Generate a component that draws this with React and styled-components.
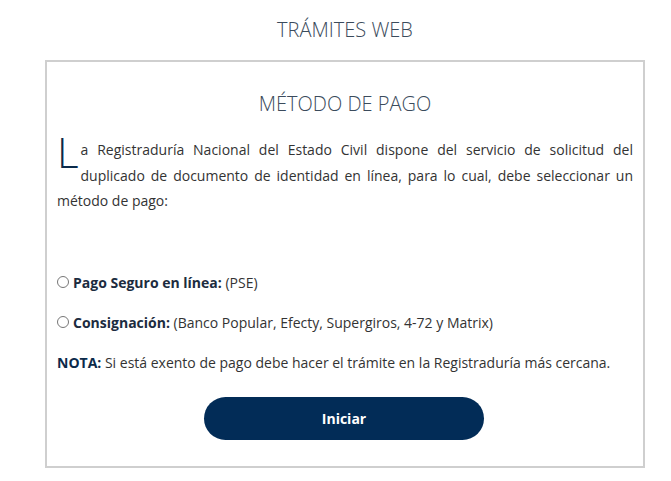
import React from "react";
import styled, { createGlobalStyle } from "styled-components";

const GlobalStyle = createGlobalStyle`
  body {
    margin: 0;
    background: #ffffff;
    font-family: "Open Sans", "Liberation Sans", sans-serif;
  }
`;

const Page = styled.div`
  width: 671px;
  padding: 16px 26px 0 45px;
  box-sizing: border-box;
`;

const PageTitle = styled.h1`
  margin: 0 0 17px 0;
  text-align: center;
  font-size: 20px;
  font-weight: 300;
  color: #3b4b5c;
`;

const Card = styled.div`
  border: 2px solid #cfcfcf;
  padding: 28px 10px 26px 10px;
`;

const CardTitle = styled.h2`
  margin: 0 0 20px 0;
  text-align: center;
  font-size: 20px;
  font-weight: 300;
  color: #3b4b5c;
`;

const Intro = styled.p`
  margin: 0 0 59px 0;
  font-size: 14px;
  line-height: 25.5px;
  color: #333;
  text-align: justify;
`;

const DropCap = styled.span`
  float: left;
  font-size: 42px;
  font-weight: 300;
  line-height: 38px;
  height: 38px;
  color: #0b2a4a;
  margin: -4px 2px 0 0;
`;

const Option = styled.label`
  display: flex;
  align-items: center;
  gap: 4px;
  font-size: 14px;
  color: #333;
  margin-bottom: 21px;
  b {
    font-weight: 700;
    color: #1c2c40;
  }
`;

const Radio = styled.input`
  width: 12px;
  height: 12px;
  margin: 0;
`;

const Note = styled.p`
  margin: 0 0 25px 0;
  font-size: 14px;
  color: #333;
  b {
    font-weight: 700;
    color: #0b2a4a;
  }
`;

const Actions = styled.div`
  display: flex;
  justify-content: center;
`;

const Button = styled.button`
  width: 280px;
  height: 43px;
  border: none;
  border-radius: 22px;
  background: #022c57;
  color: #fff;
  font-family: "Open Sans", "Liberation Sans", sans-serif;
  font-size: 14px;
  font-weight: 700;
  margin-right: 2px;
`;

export default function App() {
  return (
    <>
      <GlobalStyle />
      <Page>
        <PageTitle>TRÁMITES WEB</PageTitle>
        <Card>
          <CardTitle>MÉTODO DE PAGO</CardTitle>
          <Intro>
            <DropCap>L</DropCap>a Registraduría Nacional del Estado Civil dispone del servicio de
            solicitud del duplicado de documento de identidad en línea, para lo cual, debe
            seleccionar un método de pago:
          </Intro>
          <Option>
            <Radio type="radio" name="pago" />
            <span>
              <b>Pago Seguro en línea:</b> (PSE)
            </span>
          </Option>
          <Option>
            <Radio type="radio" name="pago" />
            <span>
              <b>Consignación:</b> (Banco Popular, Efecty, Supergiros, 4-72 y Matrix)
            </span>
          </Option>
          <Note>
            <b>NOTA:</b> Si está exento de pago debe hacer el trámite en la Registraduría más
            cercana.
          </Note>
          <Actions>
            <Button>Iniciar</Button>
          </Actions>
        </Card>
      </Page>
    </>
  );
}
